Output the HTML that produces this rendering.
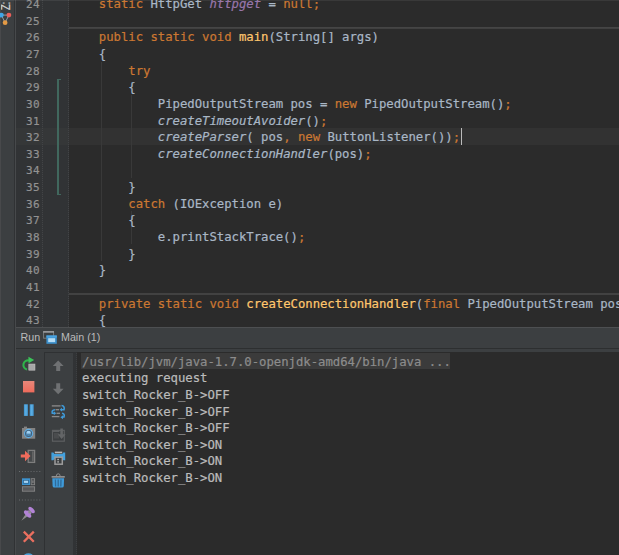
<!DOCTYPE html>
<html><head><meta charset="utf-8"><title>Main</title>
<style>
html,body{margin:0;padding:0;}
body{width:619px;height:555px;overflow:hidden;background:#2b2b2b;position:relative;font-family:"DejaVu Sans Mono","Liberation Mono",monospace;}
.abs{position:absolute;}
#strip{left:0;top:0;width:15px;height:555px;background:#3c3f41;overflow:hidden;}
#stripb{left:14px;top:0;width:2px;height:555px;background:linear-gradient(to right,#303234 0,#303234 1px,#47494b 1px,#47494b 2px);}
#gutter{left:16px;top:0;width:53px;height:327px;background:#313335;}
#editor{left:69px;top:0;width:550px;height:327px;background:#2b2b2b;overflow:hidden;}
.ln,.cl,.co{-webkit-text-stroke:0.2px;position:absolute;font-size:12.3px;line-height:17px;height:17px;white-space:pre;}
.ln{left:15.4px;width:24.5px;text-align:right;color:#929292;font-size:11px;letter-spacing:0.3px;}
.cl{left:69.3px;color:#a9b7c6;letter-spacing:-0.03px;}
.k{color:#cc7832;}
.m{color:#ffc66d;}
.sf{color:#9876aa;font-style:italic;}
.i{font-style:italic;}
.co{left:82px;color:#bbbbbb;letter-spacing:-0.028px;}
.first{color:#8c8c8c;background:#3e4143;display:inline-block;height:16px;line-height:16px;padding:0 2px 0 1px;margin-left:-1px;}
.sep{left:69px;width:550px;height:1px;background:#4a4a4a;}
.guide{width:1px;background:#393939;}
.dotv{width:1px;background:repeating-linear-gradient(to bottom,#424446 0,#424446 1px,#333537 1px,#333537 2px);}
#caretrow{left:69px;top:128px;width:550px;height:17px;background:#323232;}
#runhdr{left:16px;top:328px;width:603px;height:20px;background:#3c3f41;}
.ui{font-family:"Liberation Sans","DejaVu Sans",sans-serif;font-size:10.7px;color:#bbbbbb;}
#panel{left:16px;top:349px;width:603px;height:206px;background:#3c3f41;}
#console{left:77px;top:352px;width:542px;height:203px;background:#2b2b2b;}
#vtext{left:-0.5px;top:10px;transform-origin:0 0;transform:rotate(-90deg) scaleX(0.74);font-family:"Liberation Sans","DejaVu Sans",sans-serif;font-size:12.6px;color:#d4d4d4;white-space:nowrap;line-height:12px;-webkit-text-stroke:0.25px;}
</style></head>
<body>
<div id="strip" class="abs"><div id="vtext" class="abs">Z: Structure</div></div>
<div id="stripb" class="abs"></div>
<div class="abs" style="left:0;top:0;width:1px;height:555px;background:#48494b"></div>
<svg class="abs" style="left:0;top:10px" width="16" height="20" viewBox="0 10 16 20">
<g stroke="#9aa7b0" stroke-width="0.9"><line x1="1.4" y1="15.1" x2="8.9" y2="15.1"/><line x1="1.4" y1="15.1" x2="5.1" y2="22.7"/><line x1="8.9" y1="15.1" x2="5.1" y2="22.7"/></g>
<circle cx="1.4" cy="15.1" r="2.4" fill="#40a6e8"/><circle cx="8.9" cy="15.1" r="2.4" fill="#ea5f5a"/><circle cx="5.1" cy="22.7" r="2.4" fill="#e39a45"/>
</svg>
<div id="gutter" class="abs"></div>
<div id="editor" class="abs"></div>
<div id="caretrow" class="abs"></div>
<div class="abs" style="left:16px;top:128px;width:53px;height:17px;background:rgba(255,255,255,0.018)"></div>
<div class="abs sep" style="top:27px;background:#454545"></div><div class="abs sep" style="top:28px;background:#404040"></div>
<div class="abs sep" style="top:293px;background:#424242"></div><div class="abs sep" style="top:294px;background:#424242"></div>
<div class="abs guide" style="left:101px;top:62px;height:199px"></div>
<div class="abs guide" style="left:131px;top:95px;height:83px"></div>
<div class="abs guide" style="left:131px;top:211px;height:33px"></div>
<div class="abs dotv" style="left:42px;top:0;height:327px"></div>
<div class="abs dotv" style="left:68px;top:0;height:327px"></div>
<!-- vcs change marker -->
<div class="abs" style="left:57px;top:79px;width:2px;height:116px;background:#41685e"></div>
<div class="abs" style="left:57px;top:79px;width:4px;height:1px;background:#41685e"></div>
<div class="abs" style="left:57px;top:194px;width:4px;height:1px;background:#41685e"></div>
<div class="ln" style="top:-4.00px">24</div>
<div class="cl" style="top:-4.00px">    <span class="k">static </span>HttpGet <span class="sf">httpget</span> = <span class="k">null;</span></div>
<div class="ln" style="top:13.00px">25</div>
<div class="ln" style="top:29.00px">26</div>
<div class="cl" style="top:29.00px">    <span class="k">public static void </span><span class="m">main</span>(String[] args)</div>
<div class="ln" style="top:46.00px">27</div>
<div class="cl" style="top:46.00px">    {</div>
<div class="ln" style="top:63.00px">28</div>
<div class="cl" style="top:63.00px">        <span class="k">try</span></div>
<div class="ln" style="top:79.00px">29</div>
<div class="cl" style="top:79.00px">        {</div>
<div class="ln" style="top:96.00px">30</div>
<div class="cl" style="top:96.00px">            PipedOutputStream pos = <span class="k">new </span>PipedOutputStream()<span class="k">;</span></div>
<div class="ln" style="top:113.00px">31</div>
<div class="cl" style="top:113.00px">            <span class="i">createTimeoutAvoider</span>()<span class="k">;</span></div>
<div class="ln" style="top:129.00px">32</div>
<div class="cl" style="top:129.00px">            <span class="i">createParser</span>( pos<span class="k">, new </span>ButtonListener())<span class="k">;</span></div>
<div class="ln" style="top:146.00px">33</div>
<div class="cl" style="top:146.00px">            <span class="i">createConnectionHandler</span>(pos)<span class="k">;</span></div>
<div class="ln" style="top:162.00px">34</div>
<div class="ln" style="top:179.00px">35</div>
<div class="cl" style="top:179.00px">        }</div>
<div class="ln" style="top:196.00px">36</div>
<div class="cl" style="top:196.00px">        <span class="k">catch </span>(IOException e)</div>
<div class="ln" style="top:212.00px">37</div>
<div class="cl" style="top:212.00px">        {</div>
<div class="ln" style="top:229.00px">38</div>
<div class="cl" style="top:229.00px">            e.printStackTrace()<span class="k">;</span></div>
<div class="ln" style="top:246.00px">39</div>
<div class="cl" style="top:246.00px">        }</div>
<div class="ln" style="top:262.00px">40</div>
<div class="cl" style="top:262.00px">    }</div>
<div class="ln" style="top:279.00px">41</div>
<div class="ln" style="top:296.00px">42</div>
<div class="cl" style="top:296.00px">    <span class="k">private static void </span><span class="m">createConnectionHandler</span>(<span class="k">final </span>PipedOutputStream pos</div>
<div class="ln" style="top:312.00px">43</div>
<div class="cl" style="top:312.00px">    {</div>
<div class="abs" style="left:0;top:0;width:619px;height:1px;background:rgba(255,255,255,0.07)"></div>
<div class="abs" style="left:461px;top:128px;width:1px;height:17px;background:#bbbbbb"></div>
<div class="abs" style="left:16px;top:327px;width:603px;height:1px;background:#4d4f51"></div>
<div id="runhdr" class="abs"></div>
<div class="abs" style="left:16px;top:348px;width:603px;height:1px;background:#2d2f30"></div>
<div id="panel" class="abs"></div>
<div class="abs ui" style="left:20.5px;top:331px;line-height:13px">Run</div>
<div class="abs ui" style="left:61px;top:331px;line-height:13px">Main (1)</div>
<!-- second toolbar border -->
<div class="abs" style="left:44px;top:352px;width:33px;height:1px;background:#2f3133"></div>
<div class="abs" style="left:44px;top:352px;width:1px;height:203px;background:#2f3133"></div>
<div class="abs" style="left:73px;top:353px;width:4px;height:202px;background:#313335"></div>
<div class="abs" style="left:76px;top:353px;width:1px;height:202px;background:repeating-linear-gradient(to bottom,#3d3f41 0,#3d3f41 1px,#313335 1px,#313335 2px)"></div>
<div id="console" class="abs"></div>
<div class="abs" style="left:81px;top:353px;width:369px;height:16px;background:#3b3b3b"></div>
<div class="co" style="top:354.00px;color:#8c8c8c">/usr/lib/jvm/java-1.7.0-openjdk-amd64/bin/java ...</div>
<div class="co" style="top:370.00px">executing request</div>
<div class="co" style="top:387.00px">switch_Rocker_B-&gt;OFF</div>
<div class="co" style="top:404.00px">switch_Rocker_B-&gt;OFF</div>
<div class="co" style="top:420.00px">switch_Rocker_B-&gt;OFF</div>
<div class="co" style="top:437.00px">switch_Rocker_B-&gt;ON</div>
<div class="co" style="top:453.00px">switch_Rocker_B-&gt;ON</div>
<div class="co" style="top:470.00px">switch_Rocker_B-&gt;ON</div>
<svg class="abs" style="left:16px;top:327px" width="62" height="228" viewBox="16 327 62 228">
<!-- header window icon -->
<rect x="43.6" y="331.6" width="10" height="6.6" fill="none" stroke="#7d8082" stroke-width="0.9"/>
<rect x="43.2" y="331.1" width="10.8" height="1.6" fill="#9a9c9e"/>
<rect x="46.4" y="335.6" width="10.4" height="8.2" fill="#3c8fcb"/>
<rect x="46.4" y="335.4" width="10.4" height="2.2" fill="#4aa3e0"/>
<rect x="48.2" y="338.2" width="6.9" height="3.9" fill="#b5dcf4"/>
<!-- rerun -->
<path d="M29 360.5 A4.6 4.6 0 1 0 27 369.5" fill="none" stroke="#2fb34a" stroke-width="2.1"/>
<path d="M28.4 356.7 L34.2 360 L28.6 363.2 Z" fill="#3cc35a"/>
<rect x="28.8" y="364" width="6.2" height="6.2" fill="#a6a6a6" stroke="#c4c4c4" stroke-width="0.5"/>
<!-- stop -->
<defs><linearGradient id="gs" x1="0" y1="0" x2="0" y2="1"><stop offset="0" stop-color="#e6877a"/><stop offset="1" stop-color="#ef6b5b"/></linearGradient>
<linearGradient id="gb" x1="0" y1="0" x2="1" y2="0"><stop offset="0" stop-color="#3d93cf"/><stop offset="0.5" stop-color="#5fb0e4"/><stop offset="1" stop-color="#3d93cf"/></linearGradient></defs>
<rect x="23" y="381" width="11.4" height="11.4" fill="url(#gs)"/>
<!-- pause -->
<rect x="23.9" y="404.3" width="4" height="11.6" fill="url(#gb)"/>
<rect x="29.7" y="404.3" width="4" height="11.6" fill="url(#gb)"/>
<!-- camera -->
<rect x="22" y="428" width="13.2" height="10.7" fill="#838383"/>
<rect x="24" y="426.6" width="3" height="1.6" fill="#838383"/>
<circle cx="28.6" cy="433.5" r="4.1" fill="#3f5f7a" stroke="#62ade2" stroke-width="1.1"/>
<circle cx="28.6" cy="433.1" r="2.3" fill="#9fd0f2"/>
<rect x="26" y="433.6" width="5.2" height="2" fill="#4e86b0"/>
<!-- exit -->
<rect x="28.2" y="450.4" width="6.4" height="12" fill="#46494b" stroke="#7e7e7e" stroke-width="1.3"/>
<rect x="32.2" y="451.4" width="1.4" height="10" fill="#6a6a6a"/>
<path d="M20.8 454.4 H25 V450.8 L30.5 456 L25 461.2 V457.6 H20.8 Z" fill="#ef6b5b"/>
<!-- dotted sep -->
<line x1="19" y1="471.5" x2="40.5" y2="471.5" stroke="#6a6d6f" stroke-width="1" stroke-dasharray="1 1.9"/>
<line x1="19" y1="500" x2="40.5" y2="500" stroke="#6a6d6f" stroke-width="1" stroke-dasharray="1 1.9"/>
<!-- layout -->
<rect x="22" y="478.3" width="8.1" height="6.7" fill="#3d93cf"/>
<rect x="23.2" y="480" width="5.7" height="3.6" fill="#2d638e"/>
<rect x="23.9" y="480.7" width="4.2" height="2.2" fill="#a8d4f2"/>
<rect x="31.2" y="478.7" width="3.4" height="6" fill="#4a4c4e" stroke="#858585" stroke-width="0.9"/>
<rect x="32.5" y="480.4" width="0.9" height="2.6" fill="#9a9a9a"/>
<rect x="22.4" y="486.8" width="12.2" height="4.4" fill="#58595b" stroke="#858585" stroke-width="0.9"/>
<!-- pin -->
<path d="M21.3 520.7 L25.6 514.2 L27.6 516.2 Z" fill="#8e8e8e"/>
<ellipse cx="31.6" cy="510" rx="2" ry="4" transform="rotate(-45 31.6 510)" fill="#b283d6"/>
<ellipse cx="27.6" cy="514" rx="2.2" ry="4.6" transform="rotate(-45 27.6 514)" fill="#b283d6"/>
<path d="M28 510 L31.5 513.5 L29.5 515 L26.5 512 Z" fill="#b283d6"/>
<circle cx="29.7" cy="512" r="1.5" fill="#8d8d8d"/>
<!-- close x -->
<path d="M23.8 531.6 L33.8 541.8 M33.8 531.6 L23.8 541.8" stroke="#ea6f5f" stroke-width="2.3" fill="none"/>
<!-- help top -->
<ellipse cx="28.4" cy="557.2" rx="5" ry="4" fill="#4aa0d8"/>
<!-- up / down -->
<path d="M58.2 360.4 L63.6 366 H60.2 V371 H56.2 V366 H52.8 Z" fill="#6f7173"/>
<path d="M58.2 394.3 L63.6 388.8 H60.2 V383.2 H56.2 V388.8 H52.8 Z" fill="#6f7173"/>
<!-- soft wrap -->
<g stroke="#8b8b8b" stroke-width="1.3"><line x1="51.8" y1="405.9" x2="60.6" y2="405.9"/><line x1="55.5" y1="409.7" x2="59" y2="409.7"/><line x1="56.5" y1="413.3" x2="60" y2="413.3"/><line x1="51.8" y1="416.6" x2="59.4" y2="416.6"/></g>
<g fill="none" stroke="#3f9ad8" stroke-width="1.6">
<path d="M61.5 405.5 Q65 406 64 409.7 H61"/>
<path d="M55 409.8 Q51.3 410 52.3 413.3 H54.5"/>
<path d="M62 413.3 Q65 413.8 64 417 H62.5"/>
</g>
<path d="M62 407.8 L59.6 409.7 L62 411.6 Z M53.8 411.3 L56.2 413.3 L53.8 415.3 Z M63 415.3 L60.4 417.2 L63 419.2 Z" fill="#3f9ad8"/>
<!-- scroll to end -->
<rect x="52.5" y="430.4" width="11.8" height="10.8" fill="none" stroke="#5d5f61" stroke-width="1.2"/>
<rect x="52.4" y="430" width="7" height="2" fill="#5d5f61"/>
<path d="M54 433 H59 V438.5 H54 Z" fill="#4a4c4e"/>
<path d="M60.3 428.6 H62.9 V434.3 H65.6 L61.6 439 L57.8 434.3 H60.3 Z" fill="#636567"/>
<!-- print -->
<rect x="54.8" y="451.6" width="7.4" height="1.7" fill="#b8b8b8"/>
<path d="M51.4 452.6 H53.4 L54.5 454 H62.2 L63.3 452.6 H65.2 V460.2 H63.3 L62.2 458.8 H54.5 L53.4 460.2 H51.4 Z" fill="#43a0dc"/>
<rect x="55" y="457.2" width="7.3" height="7" fill="#3c3f41" stroke="#9c9c9c" stroke-width="1.5"/>
<rect x="57.3" y="458.8" width="1.6" height="1.4" fill="#b5b5b5"/><rect x="57.3" y="461.2" width="1.6" height="1.4" fill="#b5b5b5"/>
<!-- trash -->
<path d="M56.3 476 Q56.3 473.8 58.2 473.8 Q60.1 473.8 60.1 476" fill="none" stroke="#8b8b8b" stroke-width="1"/>
<rect x="51.6" y="476" width="13.2" height="1.7" fill="#8f8f8f"/>
<path d="M52.3 478.3 H64.1 L63.8 486 Q63.6 487.6 62.2 487.6 H54.2 Q52.8 487.6 52.6 486 Z" fill="#3f9ad8"/>
<g stroke="#2f6a98" stroke-width="1.3"><line x1="55.4" y1="479.6" x2="55.6" y2="486.6"/><line x1="58.2" y1="479.6" x2="58.2" y2="486.6"/><line x1="61" y1="479.6" x2="60.8" y2="486.6"/></g>
</svg>

</body></html>
